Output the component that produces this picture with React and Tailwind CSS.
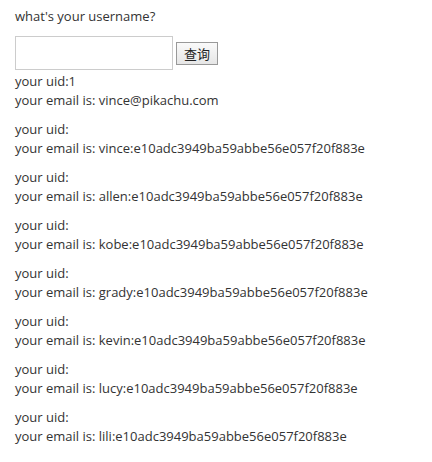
export default function App() {
  const rows = ["vince", "allen", "kobe", "grady", "kevin", "lucy", "lili"];
  return (
    <div className="px-[15px] pt-[7px] text-[13px] leading-[19px] text-[#333]" style={{ fontFamily: '"Open Sans", "Noto Sans CJK SC", sans-serif' }}>
      <p>what's your username?</p>
      <div className="mt-[10px] flex items-center gap-[3px]">
        <input className="h-[34px] w-[158px] border border-[#ccc] bg-white outline-none" />
        <button className="h-[23px] w-[42px] border border-[#999] bg-gradient-to-b from-[#fafafa] to-[#e6e6e6] text-[13px] leading-none text-[#222]" style={{ fontFamily: '"Noto Sans CJK SC", sans-serif' }}>查询</button>
      </div>
      <div className="mt-[2px]">
        <p>your uid:1</p>
        <p>your email is: vince@pikachu.com</p>
      </div>
      {rows.map((r) => (
        <div key={r} className="mt-[10px]">
          <p>your uid:</p>
          <p>your email is: {r}:e10adc3949ba59abbe56e057f20f883e</p>
        </div>
      ))}
    </div>
  );
}
